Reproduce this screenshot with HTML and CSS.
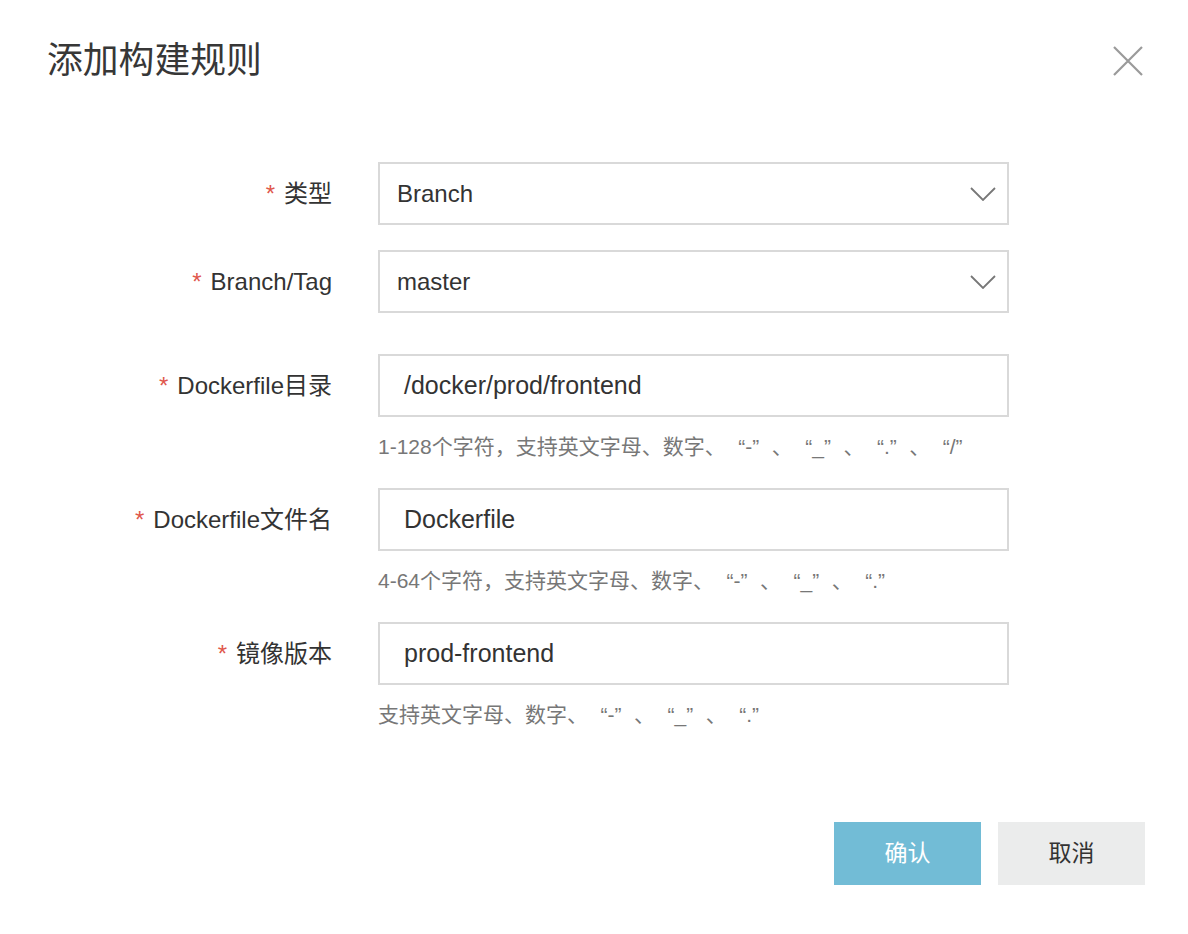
FILE: index.html
```html
<!DOCTYPE html>
<html lang="zh-CN">
<head>
<meta charset="utf-8">
<title>添加构建规则</title>
<link rel="stylesheet" href="styles.css">
</head>
<body>
<div class="dialog">
  <div class="header">
    <h1 class="title">添加构建规则</h1>
    <button class="close" type="button" aria-label="关闭">
      <svg width="30" height="30" viewBox="0 0 30 30"><path d="M1 1 L29 29 M29 1 L1 29" stroke="#9a9a9a" stroke-width="2.2" fill="none"/></svg>
    </button>
  </div>
  <form class="form">
    <div class="row row-gap-s">
      <label class="label"><span class="req">*</span>类型</label>
      <div class="field">
        <div class="select"><span class="value">Branch</span>
          <svg class="chev" width="26" height="14" viewBox="0 0 26 14"><path d="M1 1 L13 13 L25 1" stroke="#777" stroke-width="1.8" fill="none"/></svg>
        </div>
      </div>
    </div>
    <div class="row row-gap-m">
      <label class="label"><span class="req">*</span>Branch/Tag</label>
      <div class="field">
        <div class="select"><span class="value">master</span>
          <svg class="chev" width="26" height="14" viewBox="0 0 26 14"><path d="M1 1 L13 13 L25 1" stroke="#777" stroke-width="1.8" fill="none"/></svg>
        </div>
      </div>
    </div>
    <div class="row row-hint">
      <label class="label"><span class="req">*</span>Dockerfile目录</label>
      <div class="field">
        <div class="input">/docker/prod/frontend</div>
        <div class="hint">1-128个字符，支持英文字母、数字、<q class="qo">“</q>-<q class="qc">”</q>、<q class="qo">“</q>_<q class="qc">”</q>、<q class="qo">“</q>.<q class="qc">”</q>、<q class="qo">“</q>/<q class="qc">”</q></div>
      </div>
    </div>
    <div class="row row-hint">
      <label class="label"><span class="req">*</span>Dockerfile文件名</label>
      <div class="field">
        <div class="input">Dockerfile</div>
        <div class="hint">4-64个字符，支持英文字母、数字、<q class="qo">“</q>-<q class="qc">”</q>、<q class="qo">“</q>_<q class="qc">”</q>、<q class="qo">“</q>.<q class="qc">”</q></div>
      </div>
    </div>
    <div class="row row-hint">
      <label class="label"><span class="req">*</span>镜像版本</label>
      <div class="field">
        <div class="input">prod-frontend</div>
        <div class="hint">支持英文字母、数字、<q class="qo">“</q>-<q class="qc">”</q>、<q class="qo">“</q>_<q class="qc">”</q>、<q class="qo">“</q>.<q class="qc">”</q></div>
      </div>
    </div>
  </form>
  <div class="footer">
    <button class="btn btn-primary" type="button">确认</button>
    <button class="btn btn-default" type="button">取消</button>
  </div>
</div>
</body>
</html>
```

FILE: styles.css
```css
html, body {
  margin: 0;
  padding: 0;
  background: #ffffff;
}
body {
  font-family: "Liberation Sans", "Noto Sans CJK SC", sans-serif;
  color: #333333;
}
.dialog {
  width: 1188px;
  height: 934px;
  box-sizing: border-box;
}
.header {
  display: flex;
  align-items: center;
  justify-content: space-between;
  padding: 41px 45px 0 47px;
  height: 40px;
}
.title {
  margin: 0;
  font-size: 35.8px;
  line-height: 40px;
  font-weight: normal;
  color: #373737;
}
.close {
  border: 0;
  background: transparent;
  padding: 0;
  width: 30px;
  height: 30px;
  display: block;
  cursor: pointer;
}
.close svg { display: block; }
.form {
  margin-top: 81px;
}
.row {
  display: flex;
  align-items: flex-start;
}
.row-gap-s { margin-bottom: 25px; }
.row-gap-m { margin-bottom: 41px; }
.row-hint { margin-bottom: 23px; }
.label {
  width: 332px;
  flex: none;
  text-align: right;
  font-size: 24px;
  line-height: 63px;
  height: 63px;
  color: #333333;
  white-space: nowrap;
}
.req {
  color: #e0574c;
  margin-right: 9px;
}
.field {
  margin-left: 46px;
  width: 631px;
}
.select, .input {
  box-sizing: border-box;
  height: 63px;
  border: 2px solid #d9d9d9;
  background: #ffffff;
  line-height: 59px;
  color: #333333;
}
.select {
  display: flex;
  align-items: center;
  justify-content: space-between;
  padding: 0 11px 0 17px;
  font-size: 24px;
}
.chev { display: block; }
.input {
  padding: 0 24px;
  font-size: 25px;
}
.hint {
  margin-top: 12px;
  font-size: 21px;
  line-height: 36px;
  height: 36px;
  color: #777777;
  white-space: nowrap;
}
.hint q {
  quotes: none;
  display: inline-block;
  width: 19.5px;
}
.hint .qo { text-align: right; }
.hint .qc { text-align: left; }
.footer {
  display: flex;
  justify-content: flex-end;
  gap: 17px;
  margin-top: 89px;
  padding-right: 43px;
}
.btn {
  width: 147px;
  height: 63px;
  border: 0;
  font-family: "Liberation Sans", "Noto Sans CJK SC", sans-serif;
  font-size: 23px;
  padding: 0 0 5px 0;
  cursor: pointer;
}
.btn-primary {
  background: #72bcd6;
  color: #ffffff;
}
.btn-default {
  background: #ebecec;
  color: #333333;
}
```
